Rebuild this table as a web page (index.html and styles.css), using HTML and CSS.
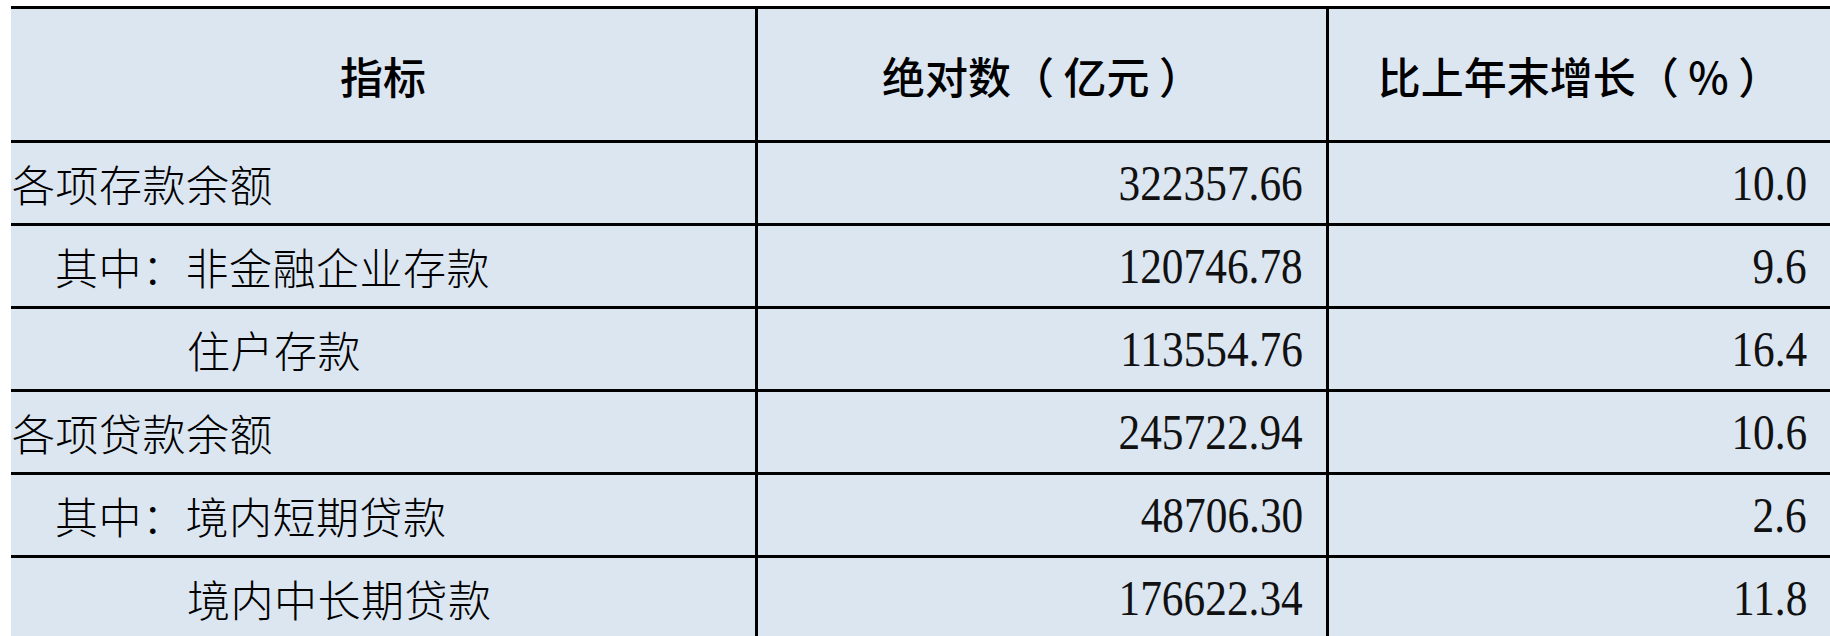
FILE: index.html
```html
<!DOCTYPE html>
<html lang="zh-CN">
<head>
<meta charset="utf-8">
<title>存贷款余额</title>
<link rel="stylesheet" href="styles.css">
</head>
<body>
<div class="table">
  <div class="row head">
    <div class="cell">指标</div>
    <div class="cell">绝对数<span class="lp">（</span>亿元<span class="rp">）</span></div>
    <div class="cell">比上年末增长<span class="lp">（</span>%<span class="rp">）</span></div>
  </div>
  <div class="row">
    <div class="cell name lv1">各项存款余额</div>
    <div class="cell num"><span>322357.66</span></div>
    <div class="cell num"><span>10.0</span></div>
  </div>
  <div class="row">
    <div class="cell name lv2">其中：非金融企业存款</div>
    <div class="cell num"><span>120746.78</span></div>
    <div class="cell num"><span>9.6</span></div>
  </div>
  <div class="row">
    <div class="cell name lv3">住户存款</div>
    <div class="cell num"><span>113554.76</span></div>
    <div class="cell num"><span>16.4</span></div>
  </div>
  <div class="row">
    <div class="cell name lv1">各项贷款余额</div>
    <div class="cell num"><span>245722.94</span></div>
    <div class="cell num"><span>10.6</span></div>
  </div>
  <div class="row">
    <div class="cell name lv2">其中：境内短期贷款</div>
    <div class="cell num"><span>48706.30</span></div>
    <div class="cell num"><span>2.6</span></div>
  </div>
  <div class="row">
    <div class="cell name lv3">境内中长期贷款</div>
    <div class="cell num"><span>176622.34</span></div>
    <div class="cell num"><span>11.8</span></div>
  </div>
</div>
</body>
</html>
```
FILE: styles.css
```css
html, body {
  margin: 0;
  padding: 0;
  background: #ffffff;
  overflow: hidden;
}

.table {
  margin: 6px 0 0 11px;
  width: 1819px;
  border-top: 3px solid #000;
  background: #dce6f1;
  color: #000;
}

.row {
  display: grid;
  grid-template-columns: 744px 571px 504px;
  height: 80px;
  border-bottom: 3px solid #000;
}

.row.head {
  height: 131px;
}

.cell {
  display: flex;
  align-items: center;
  min-width: 0;
  overflow: hidden;
  white-space: nowrap;
}

.cell + .cell {
  border-left: 3px solid #000;
}

.head .cell {
  justify-content: center;
  font-family: "Noto Sans CJK SC", sans-serif;
  font-size: 43px;
  font-weight: 500;
}

.head .lp {
  margin-right: 0.22em;
}

.head .rp {
  margin-left: 0.22em;
}

.name {
  font-family: "Noto Sans CJK SC", sans-serif;
  font-size: 43px;
  font-weight: 300;
  letter-spacing: 0.5px;
}

.lv1 { padding-left: 1px; }
.lv2 { padding-left: 44px; }
.lv3 { padding-left: 176px; }

.num {
  justify-content: flex-end;
  padding-right: 23px;
  font-family: "Liberation Serif", "Times New Roman", serif;
  font-size: 51px;
  color: #111;
}

.num span {
  display: inline-block;
  transform: scaleX(0.85);
  transform-origin: right center;
}
```
